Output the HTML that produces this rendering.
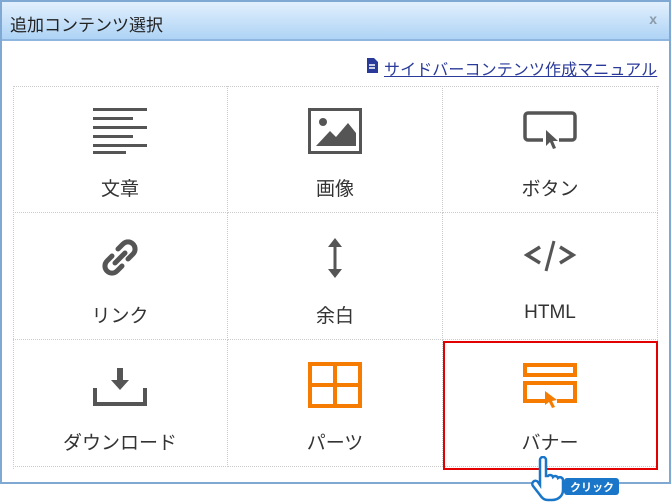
<!DOCTYPE html>
<html><head><meta charset="utf-8"><style>
*{margin:0;padding:0;box-sizing:border-box}
body{width:671px;height:502px;background:#fff;position:relative;overflow:hidden;font-family:"Liberation Sans","Noto Sans CJK JP",sans-serif}
.dlg{position:absolute;left:0;top:0;width:671px;height:484px;border:2px solid #7fa9d3;background:#fff}
.title{position:absolute;left:0;top:0;width:667px;height:39px;background:linear-gradient(#e2f0fd,#aed3f5);border-bottom:2px solid #8fb6de;font-size:17px;color:#222;padding:9px 0 0 8px}
.x{position:absolute;right:12px;top:9px;color:#8a9aa9;font-size:14px;font-weight:bold}
.link{position:absolute;top:56px;font-size:16px;letter-spacing:0.1px;color:#2a3a9a;text-decoration:underline}
.cell{position:absolute;width:215px;height:127px;border-right:1px dotted #ccc;border-bottom:1px dotted #ccc}
.lbl{position:absolute;left:0;right:0;top:88px;text-align:center;font-size:19px;color:#333}
.cell svg{position:absolute;left:50%;transform:translateX(-50%);top:22px}
.red{position:absolute;left:443px;top:341px;width:215px;height:129px;border:2px solid #e30000}
</style></head><body>
<div class="dlg">
<div class="title">追加コンテンツ選択<span class="x">x</span></div>
</div>
<svg style="position:absolute;left:366px;top:58px" width="12" height="15"><path d="M1 0h7l4 4v11H1z" fill="#2a3a9a"/><path d="M3 7h6M3 10h6" stroke="#fff" stroke-width="1.5"/></svg>
<div class="link" style="left:384px">サイドバーコンテンツ作成マニュアル</div>
<div style="position:absolute;left:13px;top:86px;width:646px;height:383px;border-left:1px dotted #ccc;border-top:1px dotted #ccc"></div>

<div class="cell" style="left:13px;top:86px"><svg width="54" height="46" viewBox="0 0 54 46"><g fill="#555"><rect x="0" y="0" width="54" height="3"/><rect x="0" y="9" width="40" height="3"/><rect x="0" y="18" width="54" height="3"/><rect x="0" y="27" width="40" height="3"/><rect x="0" y="36" width="54" height="3"/><rect x="0" y="43" width="33" height="3"/></g></svg><div class="lbl">文章</div></div>
<div class="cell" style="left:228px;top:86px"><svg width="54" height="46" viewBox="0 0 54 46"><rect x="1.5" y="1.5" width="51" height="43" fill="none" stroke="#555" stroke-width="3"/><circle cx="15" cy="14" r="4" fill="#555"/><path d="M8 38l14-15 6 6 12-14 8 10v13z" fill="#555"/></svg><div class="lbl">画像</div></div>
<div class="cell" style="left:443px;top:86px"><svg width="54" height="46" viewBox="0 0 54 46"><path d="M20 32H5a3 3 0 0 1-3-3V8a3 3 0 0 1 3-3h44a3 3 0 0 1 3 3v21a3 3 0 0 1-3 3H36" fill="none" stroke="#555" stroke-width="3.5"/><path d="M23 22l0 16 4-4 3 7 3-1-3-7 5 0z" fill="#555"/></svg><div class="lbl">ボタン</div></div>

<div class="cell" style="left:13px;top:213px"><svg width="54" height="46" viewBox="0 0 54 46"><g fill="none" stroke="#555" stroke-width="5" stroke-linecap="round"><path d="M25 14l5-5a7 7 0 0 1 10 10l-5 5"/><path d="M29 31l-5 5a7 7 0 0 1-10-10l5-5"/><path d="M22 28l10-10"/></g></svg><div class="lbl">リンク</div></div>
<div class="cell" style="left:228px;top:213px"><svg width="54" height="46" viewBox="0 0 54 46"><path d="M27 6v34" stroke="#555" stroke-width="3"/><path d="M20 12l7-9 7 9zM20 34l7 9 7-9z" fill="#555"/></svg><div class="lbl">余白</div></div>
<div class="cell" style="left:443px;top:213px"><svg width="54" height="46" viewBox="0 0 54 46"><g fill="none" stroke="#555" stroke-width="3.5"><path d="M17 12l-13 8 13 8M37 12l13 8-13 8"/><path d="M31 6l-8 30" stroke-width="3"/></g></svg><div class="lbl" style="top:89px">HTML</div></div>

<div class="cell" style="left:13px;top:340px"><svg width="54" height="46" viewBox="0 0 54 46"><path d="M2 26v16h50V26" fill="none" stroke="#555" stroke-width="4"/><rect x="24" y="6" width="6" height="12" fill="#555"/><path d="M18 18h18l-9 10z" fill="#555"/></svg><div class="lbl">ダウンロード</div></div>
<div class="cell" style="left:228px;top:340px"><svg width="54" height="46" viewBox="0 0 54 46"><rect x="2" y="2" width="50" height="42" fill="none" stroke="#f57c00" stroke-width="4"/><path d="M27 2v42M2 23h50" stroke="#f57c00" stroke-width="4"/></svg><div class="lbl">パーツ</div></div>
<div class="cell" style="left:443px;top:340px"><svg width="54" height="46" viewBox="0 0 54 46"><rect x="2" y="3" width="50" height="10" fill="none" stroke="#f57c00" stroke-width="4"/><path d="M22 39H2V21h50v18H34" fill="none" stroke="#f57c00" stroke-width="4"/><path d="M22 29l0 14 4-3 3 6 3-1-3-6 5-1z" fill="#f57c00"/></svg><div class="lbl">バナー</div></div>
<div class="red"></div>

<div style="position:absolute;left:564px;top:478px;width:55px;height:17px;background:#1a76c8;border-radius:3px;color:#fff;font-size:11px;font-weight:bold;padding:1px 0 0 6px">クリック</div>
<svg style="position:absolute;left:530px;top:456px" width="40" height="46" viewBox="0 0 40 46"><path d="M10 4a3 3 0 0 1 6 0v16h2a3 3 0 0 1 5 1 3 3 0 0 1 5 1 3 3 0 0 1 5 2v10c0 6-5 10-11 10h-4c-4 0-6-2-8-5L3 30a3 3 0 0 1 5-4l2 3z" fill="#fff" stroke="#1a76c8" stroke-width="2.5"/></svg>
</body></html>
